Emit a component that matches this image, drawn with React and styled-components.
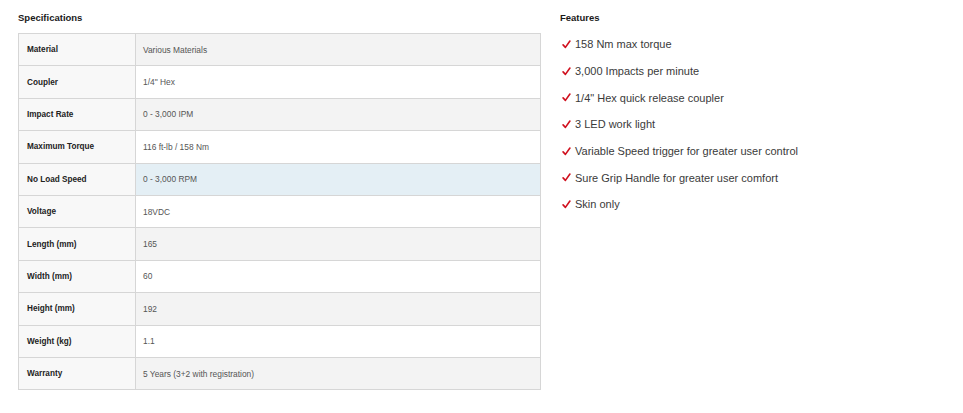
import React from "react";
import styled, { createGlobalStyle } from "styled-components";

const specs = [
  ["Material", "Various Materials"],
  ["Coupler", "1/4\" Hex"],
  ["Impact Rate", "0 - 3,000 IPM"],
  ["Maximum Torque", "116 ft-lb / 158 Nm"],
  ["No Load Speed", "0 - 3,000 RPM"],
  ["Voltage", "18VDC"],
  ["Length (mm)", "165"],
  ["Width (mm)", "60"],
  ["Height (mm)", "192"],
  ["Weight (kg)", "1.1"],
  ["Warranty", "5 Years (3+2 with registration)"],
];

const features = [
  "158 Nm max torque",
  "3,000 Impacts per minute",
  "1/4\" Hex quick release coupler",
  "3 LED work light",
  "Variable Speed trigger for greater user control",
  "Sure Grip Handle for greater user comfort",
  "Skin only",
];

const Check = () => (
  <svg width="9" height="9" viewBox="0 0 10 10">
    <path d="M1.2 5.4 L3.8 8.2 L8.8 1.2" fill="none" stroke="#d0101e" strokeWidth="1.8" strokeLinecap="round" strokeLinejoin="round" />
  </svg>
);

const App = () => {
  return (
    <>
      <GlobalStyle />
      <Page>
        <SpecColumn>
          <Heading>Specifications</Heading>
          <SpecTable>
            <tbody>
              {specs.map(([label, value], i) => (
                <Row key={label} $striped={i % 2 === 0} $active={i === 4}>
                  <LabelCell>{label}</LabelCell>
                  <ValueCell>{value}</ValueCell>
                </Row>
              ))}
            </tbody>
          </SpecTable>
        </SpecColumn>
        <FeatureColumn>
          <Heading>Features</Heading>
          <FeatureList>
            {features.map((f) => (
              <FeatureItem key={f}>
                <Check />
                <span>{f}</span>
              </FeatureItem>
            ))}
          </FeatureList>
        </FeatureColumn>
      </Page>
    </>
  );
};

const GlobalStyle = createGlobalStyle`
  body {
    margin: 0;
    background: #fff;
    font-family: "Liberation Sans", Arial, sans-serif;
    color: #222;
  }
`;

const Page = styled.div`
  display: flex;
  gap: 19px;
  padding: 11px 0 0 18px;
`;

const SpecColumn = styled.div`
  width: 523px;
`;

const FeatureColumn = styled.div`
  flex: 1;
`;

const Heading = styled.h3`
  margin: 0;
  height: 13px;
  font-size: 9.5px;
  line-height: 13px;
  font-weight: bold;
  color: #1a1a1a;
`;

const SpecTable = styled.table`
  margin-top: 9px;
  width: 100%;
  table-layout: fixed;
  border-collapse: collapse;
  border: 1px solid #d6d6d6;
  font-size: 8.4px;
`;

const Row = styled.tr`
  height: 32.4px;
  background: ${(p) => (p.$active ? "#e4eff5" : p.$striped ? "#f3f3f3" : "#fff")};
`;

const LabelCell = styled.td`
  width: 117px;
  box-sizing: border-box;
  padding: 0 0 0 8px;
  border: 1px solid #d6d6d6;
  background: #f8f8f8;
  font-size: 8.2px;
  font-weight: bold;
  color: #222;
`;

const ValueCell = styled.td`
  padding: 0 0 0 7px;
  border: 1px solid #d6d6d6;
  color: #555;
`;

const FeatureList = styled.ul`
  list-style: none;
  margin: 7px 0 0;
  padding: 0 0 0 2px;
`;

const FeatureItem = styled.li`
  display: flex;
  align-items: center;
  gap: 4px;
  height: 26.7px;
  font-size: 11px;
  color: #3a3a3a;
`;

export default App;
